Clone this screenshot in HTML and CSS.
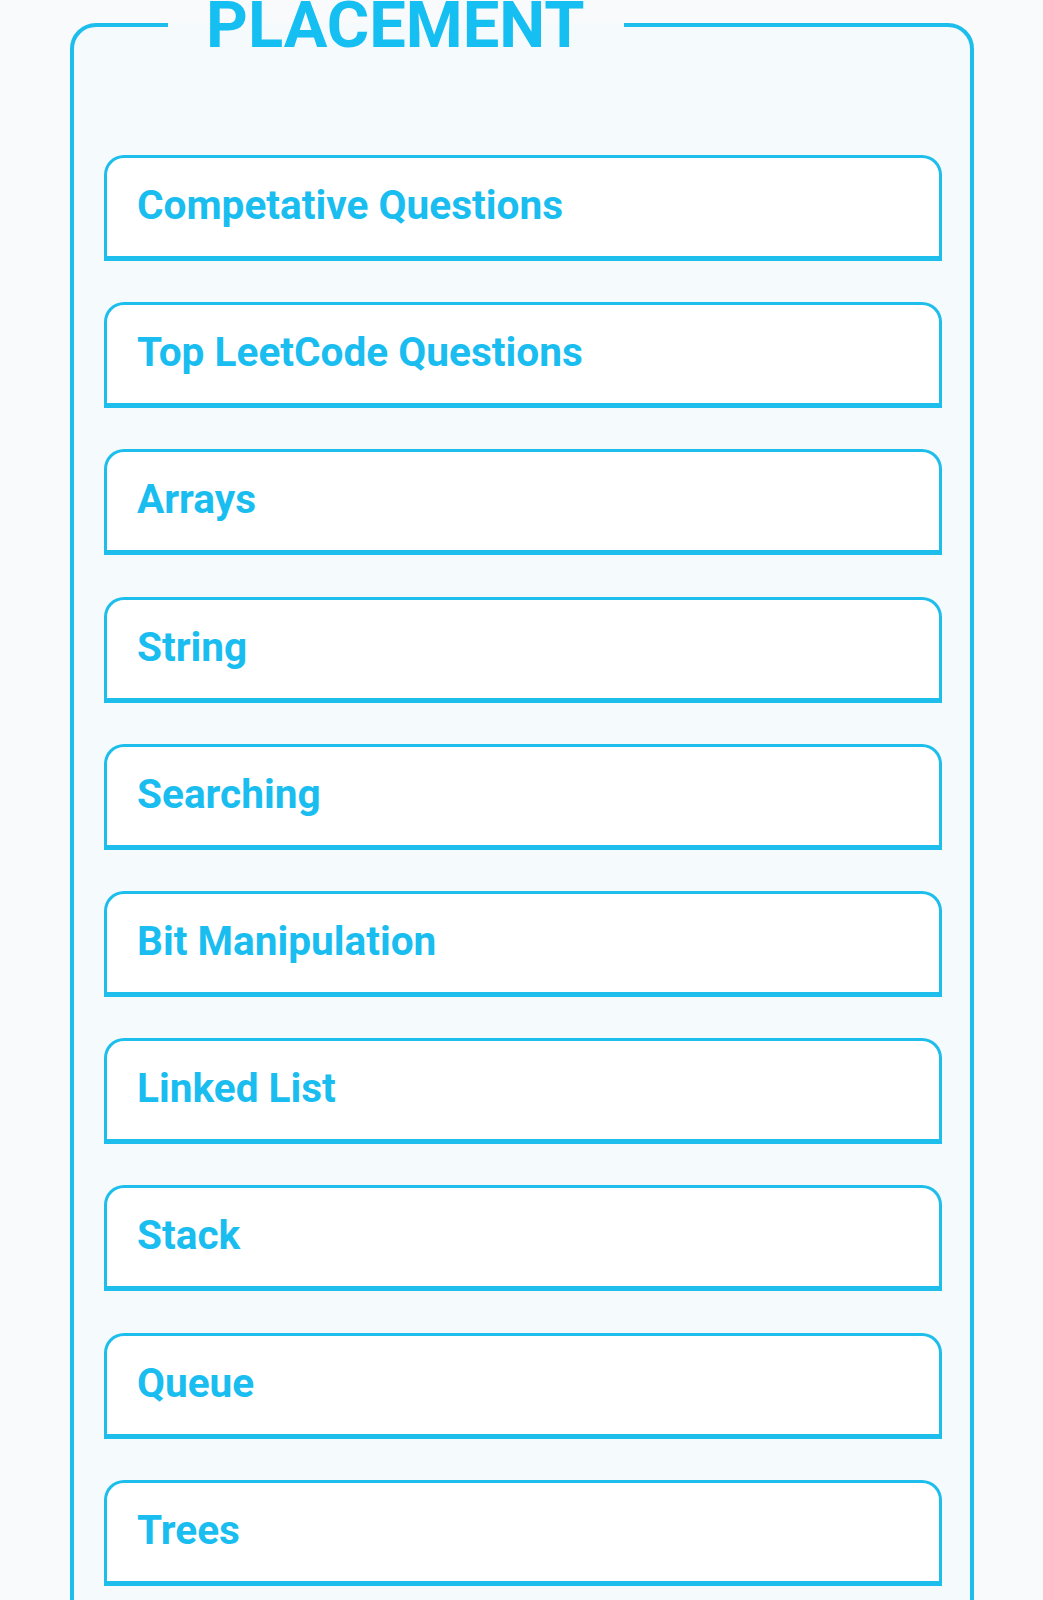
FILE: index.html
```html
<!DOCTYPE html>
<html lang="en">
<head>
<meta charset="utf-8">
<title>Placement</title>
<link rel="stylesheet" href="styles.css">
</head>
<body>
<main class="page">
  <fieldset class="panel">
    <legend class="panel-title">PLACEMENT</legend>
    <ul class="topic-list">
      <li class="topic">Competative Questions</li>
      <li class="topic">Top LeetCode Questions</li>
      <li class="topic">Arrays</li>
      <li class="topic">String</li>
      <li class="topic">Searching</li>
      <li class="topic">Bit Manipulation</li>
      <li class="topic">Linked List</li>
      <li class="topic">Stack</li>
      <li class="topic">Queue</li>
      <li class="topic">Trees</li>
    </ul>
  </fieldset>
</main>
</body>
</html>
```

FILE: styles.css
```css
html, body {
  margin: 0;
  padding: 0;
  background: #f9fafb;
}

body {
  font-family: Roboto, "Liberation Sans", Arial, sans-serif;
}

.page {
  display: block;
  padding: 0;
}

.panel {
  box-sizing: border-box;
  width: 904px;
  margin: 0 0 0 70px;
  padding: 105px 28px 41px 30px;
  border: 4px solid #1dbdec;
  border-radius: 26px;
  background: #f5fafd;
  min-inline-size: 0;
}

.panel-title {
  margin-left: 64px;
  padding: 0 39px 0 38px;
  font-size: 65px;
  font-weight: 700;
  line-height: 50px;
  color: #16bff2;
  letter-spacing: 0;
}

.topic-list {
  list-style: none;
  margin: 0;
  padding: 0;
  display: flex;
  flex-direction: column;
  gap: 41.2px;
}

.topic {
  box-sizing: border-box;
  height: 106px;
  padding: 24px 30px 0 30px;
  background: #ffffff;
  border: 3px solid #1dbdec;
  border-bottom-width: 5px;
  border-radius: 20px 20px 0 0;
  font-size: 40.6px;
  font-weight: 700;
  line-height: 47px;
  color: #19bdef;
}
```
